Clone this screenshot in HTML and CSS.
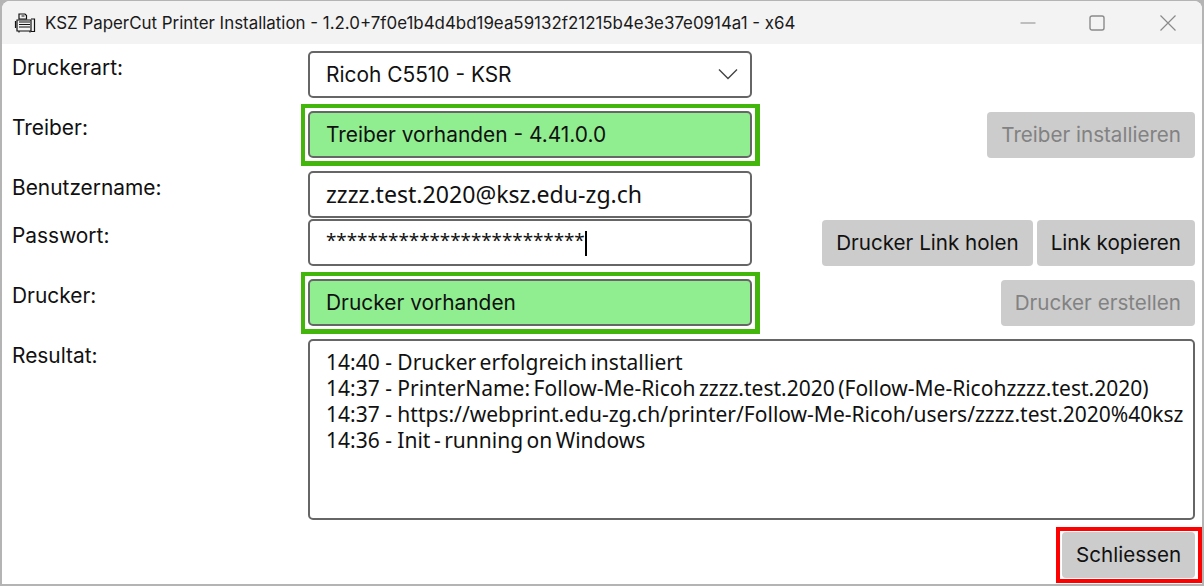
FILE: index.html
```html
<!DOCTYPE html>
<html lang="en">
<head>
    <meta charset="UTF-8">
    <meta name="viewport" content="width=device-width, initial-scale=1.0">
    <title>KSZ PaperCut Printer Installation</title>
    <link rel="stylesheet" href="styles.css">
</head>
<body>
    <div class="window">
        <div class="titlebar">
            <svg class="app-icon" width="22" height="22" viewBox="0 0 22 22" fill="none" stroke="#111" stroke-width="1.2">
                <path d="M5 2h6l1.500 1.500v3.500h-7.500z"/>
                <path d="M3 8h14v11h-14z"/>
                <path d="M1.500 9v7M5 10h11M5 12.500h11M5 15h11M5 19v1.500M16 19v1.500M7.500 4h3"/>
                <path d="M17 7h3.500v12.500h-3.500"/>
            </svg>
            <span class="title">KSZ PaperCut Printer Installation - 1.2.0+7f0e1b4d4bd19ea59132f21215b4e3e37e0914a1 - x64</span>
            <div class="win-controls">
                <svg class="win-min" width="16" height="16" viewBox="0 0 16 16" stroke="#8a8a8a" fill="none" stroke-width="1.2"><path d="M0.500 8h15"/></svg>
                <svg width="16" height="16" viewBox="0 0 16 16" stroke="#8a8a8a" fill="none" stroke-width="1.400"><rect x="1" y="1" width="14" height="14" rx="2"/></svg>
                <svg width="16" height="16" viewBox="0 0 16 16" stroke="#8a8a8a" fill="none" stroke-width="1.200"><path d="M0.500 0.500l15 15M15.500 0.500l-15 15"/></svg>
            </div>
        </div>

        <div class="form">
            <div class="row row-type">
                <label class="row-label">Druckerart:</label>
                <div class="field select">
                    <span>Ricoh C5510 - KSR</span>
                    <svg width="20" height="12" viewBox="0 0 20 12" fill="none" stroke="#444" stroke-width="1.400"><path d="M1 1.500l9 9 9-9"/></svg>
                </div>
            </div>

            <div class="row row-driver">
                <label class="row-label">Treiber:</label>
                <div class="field status">Treiber vorhanden - 4.41.0.0</div>
                <div class="actions"><button class="btn" disabled>Treiber installieren</button></div>
            </div>

            <div class="row row-user">
                <label class="row-label">Benutzername:</label>
                <div class="field input-text">zzzz.test.2020@ksz.edu-zg.ch</div>
            </div>

            <div class="row row-pass">
                <label class="row-label">Passwort:</label>
                <div class="field password"><span class="stars">*************************</span><span class="caret"></span></div>
                <div class="actions">
                    <button class="btn">Drucker Link holen</button>
                    <button class="btn">Link kopieren</button>
                </div>
            </div>

            <div class="row row-printer">
                <label class="row-label">Drucker:</label>
                <div class="field status">Drucker vorhanden</div>
                <div class="actions"><button class="btn" disabled>Drucker erstellen</button></div>
            </div>

            <div class="row row-result">
                <label class="row-label">Resultat:</label>
                <div class="field result">
                    <div><span class="time">14:40 - </span>Drucker erfolgreich installiert</div>
                    <div><span class="time">14:37 - </span>PrinterName: Follow-Me-Ricoh zzzz.test.2020 (Follow-Me-Ricohzzzz.test.2020)</div>
                    <div><span class="time">14:37 - </span>https://webprint.edu-zg.ch/printer/Follow-Me-Ricoh/users/zzzz.test.2020%40ksz</div>
                    <div><span class="time">14:36 - </span>Init - running on Windows</div>
                </div>
            </div>

            <div class="footer">
                <button class="btn btn-close">Schliessen</button>
            </div>
        </div>
    </div>
</body>
</html>
```

FILE: styles.css
```css
html, body {
    height: 100%;
}
body {
    margin: 0;
    padding: 1px 2px 2px 2px;
    box-sizing: border-box;
    background-color: #b4b4b4;
    font-family: Inter, Arial, sans-serif;
    font-size: 20.9px;
    color: #111;
    overflow: hidden;
}
.window {
    height: 100%;
    background: #fff;
    border-radius: 8px 8px 0 0;
    overflow: hidden;
}
.titlebar {
    display: flex;
    align-items: center;
    height: 43px;
    padding-left: 12px;
    background-color: #f3f3f3;
}
.app-icon {
    flex: none;
    margin-right: 9px;
}
.title {
    font-size: 16.9px;
    color: #1a1a1a;
    white-space: nowrap;
}
.win-controls {
    display: flex;
    margin-left: auto;
    gap: 55px;
    padding-right: 26px;
}
.win-min {
    margin-right: -2px;
}
.form {
    padding: 8px 7px 0 10px;
}
.row {
    display: grid;
    grid-template-columns: 296px 444px 1fr;
}
.row-label {
    font-size: 20.9px;
    line-height: 32px;
}
.row-driver, .row-printer, .row-result, .row-user {
    margin-top: 14px;
}
.row-pass {
    margin-top: 2px;
}
.field {
    box-sizing: border-box;
    height: 47px;
    margin-top: -1px;
    padding: 0 16px 1px;
    border: 2px solid #666;
    border-radius: 5px;
    display: flex;
    align-items: center;
    white-space: nowrap;
}
.select {
    justify-content: space-between;
    padding-right: 12px;
}
.status {
    position: relative;
    background-color: #90ee90;
}
.status::after {
    content: "";
    position: absolute;
    inset: -9px -10px -10px -9px;
    border: solid #43b60b;
    border-width: 4px 5px 5px 4px;
}
.input-text {
    font-family: "Noto Sans", Arial, sans-serif;
    font-size: 23.1px;
}
.password {
    align-items: flex-start;
    padding-top: 2px;
    font-family: "Noto Sans", Arial, sans-serif;
}
.stars {
    line-height: 34px;
    font-size: 18.9px;
    letter-spacing: -0.06px;
}
.caret {
    width: 2px;
    height: 25px;
    margin-top: 8px;
    background: #000;
}
.result {
    display: block;
    height: 181px;
    padding: 8px 16px;
    font-family: "Noto Sans", Arial, sans-serif;
    font-size: 21px;
    word-spacing: -2px;
    line-height: 26px;
    overflow: hidden;
}
.time {
    word-spacing: 0;
}
.row-result .result {
    grid-column: 2 / 4;
    width: 887px;
}
.actions {
    display: flex;
    justify-content: flex-end;
    align-items: center;
    gap: 4px;
    height: 46px;
}
.btn {
    position: relative;
    height: 46px;
    box-sizing: border-box;
    padding: 0 14px 2px;
    border: none;
    border-radius: 4px;
    background-color: #ccc;
    font-family: Inter, Arial, sans-serif;
    font-size: 20.6px;
    color: #111;
    white-space: nowrap;
}
.btn:disabled {
    color: #828282;
}
.footer {
    display: flex;
    justify-content: flex-end;
    margin-top: 12px;
}
.btn-close {
    width: 133px;
}
.btn-close::after {
    content: "";
    position: absolute;
    inset: -5px -7px -5px -6px;
    border: 4px solid #f00;
}
```
